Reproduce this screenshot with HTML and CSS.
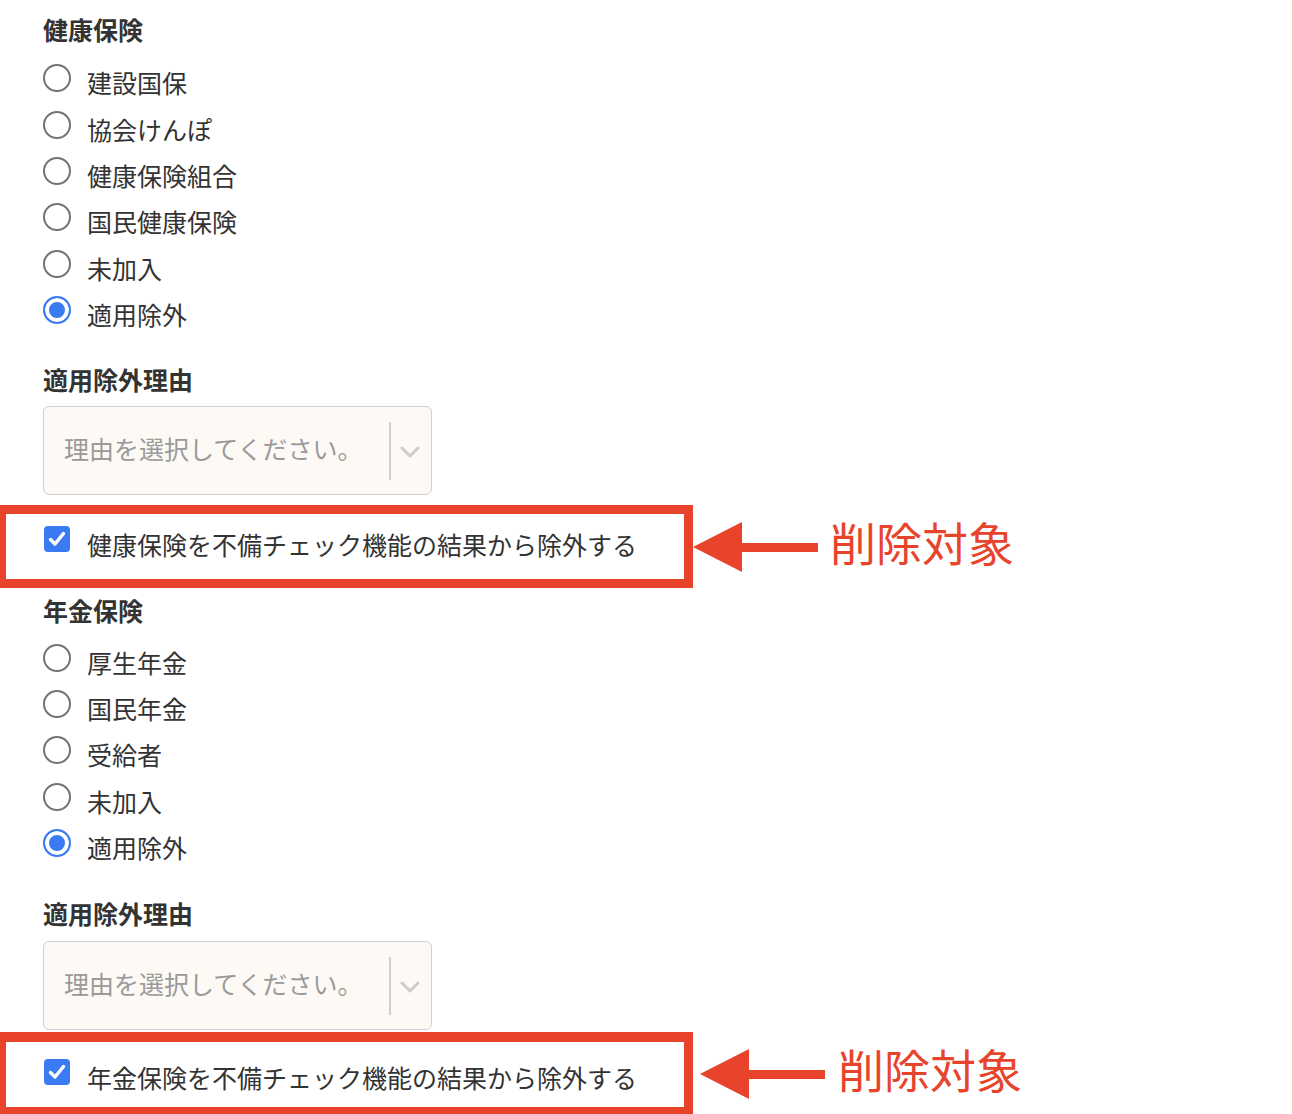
FILE: index.html
```html
<!DOCTYPE html>
<html lang="ja">
<head>
<meta charset="utf-8">
<title>保険設定</title>
<link rel="stylesheet" href="styles.css">
</head>
<body>
<div class="page">
  <div class="section">
    <h2 class="heading">健康保険</h2>
    <ul class="options">
      <li class="option"><span class="radio"></span><span class="label">建設国保</span></li>
      <li class="option"><span class="radio"></span><span class="label">協会けんぽ</span></li>
      <li class="option"><span class="radio"></span><span class="label">健康保険組合</span></li>
      <li class="option"><span class="radio"></span><span class="label">国民健康保険</span></li>
      <li class="option"><span class="radio"></span><span class="label">未加入</span></li>
      <li class="option"><span class="radio checked"></span><span class="label">適用除外</span></li>
    </ul>
    <h3 class="subheading">適用除外理由</h3>
    <div class="select">
      <span class="placeholder">理由を選択してください。</span>
      <span class="indicators">
        <span class="separator"></span>
        <svg class="chevron" width="20" height="12" viewBox="0 0 20 12"><polyline points="2,2 10,10 18,2" fill="none" stroke="#cccccc" stroke-width="3" stroke-linecap="round" stroke-linejoin="round"/></svg>
      </span>
    </div>
  </div>
  <div class="annot annot-first">
    <div class="mark-box">
      <span class="checkbox"><svg width="26" height="26" viewBox="0 0 26 26"><rect width="26" height="26" rx="4" fill="#3a7af3"/><polyline points="6.5,13.5 11,18 19.5,7.5" fill="none" stroke="#ffffff" stroke-width="3.4" stroke-linecap="round" stroke-linejoin="round"/></svg></span>
      <span class="label">健康保険を不備チェック機能の結果から除外する</span>
    </div>
    <svg class="arrow" width="125" height="50" viewBox="0 0 125 50"><polygon points="0,25 49,0 49,50" fill="#e8432b"/><rect x="48" y="21" width="77" height="9" fill="#e8432b"/></svg>
    <span class="annot-text">削除対象</span>
  </div>
  <div class="section section-second">
    <h2 class="heading">年金保険</h2>
    <ul class="options">
      <li class="option"><span class="radio"></span><span class="label">厚生年金</span></li>
      <li class="option"><span class="radio"></span><span class="label">国民年金</span></li>
      <li class="option"><span class="radio"></span><span class="label">受給者</span></li>
      <li class="option"><span class="radio"></span><span class="label">未加入</span></li>
      <li class="option"><span class="radio checked"></span><span class="label">適用除外</span></li>
    </ul>
    <h3 class="subheading">適用除外理由</h3>
    <div class="select">
      <span class="placeholder">理由を選択してください。</span>
      <span class="indicators">
        <span class="separator"></span>
        <svg class="chevron" width="20" height="12" viewBox="0 0 20 12"><polyline points="2,2 10,10 18,2" fill="none" stroke="#cccccc" stroke-width="3" stroke-linecap="round" stroke-linejoin="round"/></svg>
      </span>
    </div>
  </div>
  <div class="annot annot-second">
    <div class="mark-box">
      <span class="checkbox"><svg width="26" height="26" viewBox="0 0 26 26"><rect width="26" height="26" rx="4" fill="#3a7af3"/><polyline points="6.5,13.5 11,18 19.5,7.5" fill="none" stroke="#ffffff" stroke-width="3.4" stroke-linecap="round" stroke-linejoin="round"/></svg></span>
      <span class="label">年金保険を不備チェック機能の結果から除外する</span>
    </div>
    <svg class="arrow" width="125" height="50" viewBox="0 0 125 50"><polygon points="0,25 49,0 49,50" fill="#e8432b"/><rect x="48" y="21" width="77" height="9" fill="#e8432b"/></svg>
    <span class="annot-text">削除対象</span>
  </div>
</div>
</body>
</html>
```
FILE: styles.css
```css
* { box-sizing: border-box; }
html, body {
  margin: 0;
  padding: 0;
  background: #ffffff;
}
body {
  font-family: "Noto Sans CJK JP", "Noto Sans", sans-serif;
  color: #333333;
  overflow: hidden;
}
.page {
  padding-top: 11px;
  width: 1292px;
}
.section {
  padding-left: 43px;
}
.section-second {
  margin-top: 4px;
}
.heading {
  margin: 0;
  font-size: 25px;
  line-height: 36px;
  font-weight: 700;
  color: #333333;
}
.options {
  list-style: none;
  margin: 12px 0 0 0;
  padding: 0;
}
.section-second .options {
  margin-top: 10px;
}
.option {
  display: flex;
  align-items: center;
  height: 46.4px;
}
.radio {
  flex: none;
  width: 28px;
  height: 28px;
  border-radius: 50%;
  border: 2px solid #737373;
  background: #ffffff;
  margin-bottom: 8px;
  margin-right: 16px;
}
.radio.checked {
  border-color: #3a7af3;
  background: #3a7af3;
  box-shadow: inset 0 0 0 4px #ffffff;
}
.label {
  font-size: 25px;
  line-height: 36px;
  color: #333333;
  white-space: nowrap;
}
.subheading {
  margin: 24px 0 0 0;
  font-size: 25px;
  line-height: 36px;
  font-weight: 700;
  color: #333333;
}
.section-second .subheading {
  margin-top: 25px;
}
.select {
  margin-top: 9px;
  width: 389px;
  height: 89px;
  border: 1px solid #d0d0d0;
  border-radius: 6px;
  background: #fdf9f4;
  display: flex;
  align-items: center;
  padding-left: 20px;
}
.section-second .select {
  margin-top: 10px;
}
.placeholder {
  flex: 1;
  font-size: 25px;
  line-height: 36px;
  color: #9a9a9a;
  white-space: nowrap;
  margin-bottom: 5px;
}
.indicators {
  display: flex;
  align-items: center;
  height: 100%;
}
.separator {
  width: 2px;
  height: 58px;
  background: #cfcfcf;
  margin-right: 9px;
}
.chevron {
  margin-right: 11px;
  margin-top: 2px;
}
.annot {
  display: flex;
  align-items: center;
  margin-left: -3px;
}
.annot-first {
  margin-top: 10px;
}
.annot-second {
  margin-top: 2px;
}
.mark-box {
  flex: none;
  width: 696px;
  height: 83px;
  border: 9px solid #e8432b;
  display: flex;
  align-items: center;
  padding-left: 38px;
  padding-bottom: 5px;
}
.annot-second .mark-box {
  border-top-width: 10px;
  height: 84px;
  padding-bottom: 0;
  padding-top: 4px;
}
.checkbox {
  flex: none;
  width: 26px;
  height: 26px;
  margin-right: 17px;
  margin-bottom: 10px;
  display: flex;
}
.arrow {
  flex: none;
}
.annot-second .arrow {
  margin-left: 7px;
}
.annot-text {
  margin-left: 12px;
  font-size: 46px;
  line-height: 50px;
  color: #e8432b;
  white-space: nowrap;
  margin-bottom: 12px;
}
.annot-second .annot-text {
  margin-left: 13px;
}
```
